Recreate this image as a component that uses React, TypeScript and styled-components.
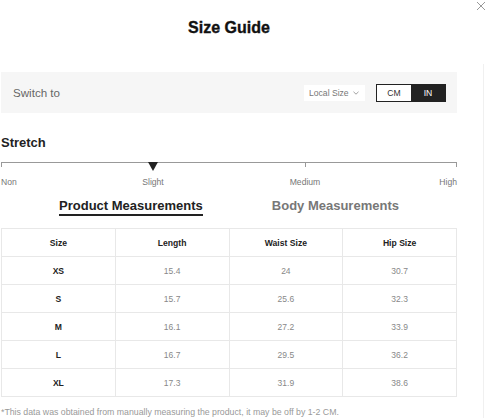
import React from "react";
import styled, { createGlobalStyle } from "styled-components";

const Global = createGlobalStyle`
  html, body { margin: 0; padding: 0; background: #fff; }
  body { font-family: "Liberation Sans", Arial, sans-serif; color: #222; overflow: hidden; }
  * { box-sizing: border-box; }
`;

const Page = styled.div`
  display: flex;
  width: 488px;
  height: 418px;
`;

const Main = styled.div`
  width: 456px;
  margin-left: 1px;
  display: flex;
  flex-direction: column;
`;

const Side = styled.div`
  flex: 1;
  display: flex;
  flex-direction: column;
`;

const CloseBtn = styled.div`
  margin: 1px 0 0 19px;
  width: 10px;
  height: 10px;
  display: flex;
`;

const Rail = styled.div`
  margin: 53px 0 0 26px;
  flex: 1;
  border-left: 1px solid #f0f0f0;
`;

const Title = styled.h1`
  margin: 19px 0 0;
  font-size: 16px;
  line-height: 18px;
  font-weight: 700;
  text-align: center;
  color: #111;
  -webkit-text-stroke: 0.35px #111;
`;

const Bar = styled.div`
  margin-top: 35px;
  height: 41px;
  background: #f6f6f6;
  display: flex;
  align-items: center;
  padding: 0 11px 0 12px;
`;

const BarLabel = styled.span`
  flex: 1;
  font-size: 11.6px;
  color: #666;
`;

const Select = styled.div`
  width: 61px;
  height: 16px;
  background: #fff;
  display: flex;
  align-items: center;
  justify-content: space-between;
  padding: 0 6px 0 5px;
  font-size: 8.6px;
  color: #777;
  margin-right: 11px;
`;

const Toggle = styled.div`
  display: flex;
  width: 70px;
  height: 18px;
  border: 1px solid #222;
`;

const ToggleOpt = styled.div<{ $active?: boolean }>`
  flex: 1;
  display: flex;
  align-items: center;
  justify-content: center;
  font-size: 8.6px;
  background: ${(p) => (p.$active ? "#222" : "#fff")};
  color: ${(p) => (p.$active ? "#fff" : "#333")};
`;

const SectionTitle = styled.h2`
  margin: 21.5px 0 0;
  font-size: 13px;
  line-height: 15px;
  font-weight: 700;
  color: #222;
`;

const Scale = styled.div`
  position: relative;
  margin-top: 12.5px;
`;

const Track = styled.div`
  display: grid;
  grid-template-columns: 1fr 1fr 1fr;
  height: 5px;
  border-top: 1px solid #999;
`;

const TrackSeg = styled.div<{ $left?: boolean; $right?: boolean }>`
  border-left: ${(p) => (p.$left ? "1px solid #999" : "none")};
  border-right: ${(p) => (p.$right ? "1px solid #999" : "none")};
`;

const Marker = styled.div`
  position: absolute;
  top: 0;
  left: 33.33%;
  transform: translateX(-50%);
  width: 0;
  height: 0;
  border-left: 5px solid transparent;
  border-right: 5px solid transparent;
  border-top: 9px solid #222;
`;

const Labels = styled.div`
  display: grid;
  grid-template-columns: repeat(6, 1fr);
  margin-top: 9.5px;
  font-size: 8.6px;
  line-height: 10px;
  color: #777;
`;

const ScaleLabel = styled.span<{ $col: string; $align: string }>`
  grid-column: ${(p) => p.$col};
  text-align: ${(p) => p.$align};
  white-space: nowrap;
`;

const Tabs = styled.div`
  display: flex;
  justify-content: center;
  gap: 69px;
  margin-top: 11.5px;
`;

const Tab = styled.div<{ $active?: boolean }>`
  font-size: 13px;
  line-height: 15px;
  font-weight: 700;
  color: ${(p) => (p.$active ? "#222" : "#777")};
  padding-bottom: 1px;
  border-bottom: 2px solid ${(p) => (p.$active ? "#222" : "transparent")};
`;

const Table = styled.table`
  margin-top: 12px;
  width: 456px;
  border-collapse: collapse;
  table-layout: fixed;
`;

const Th = styled.th`
  height: 28px;
  padding: 0;
  border: 1px solid #e8e8e8;
  font-size: 8.6px;
  font-weight: 700;
  color: #222;
  text-align: center;
`;

const Td = styled.td<{ $strong?: boolean }>`
  height: 28px;
  padding: 0;
  border: 1px solid #e8e8e8;
  font-size: ${(p) => (p.$strong ? "8.6px" : "8.5px")};
  font-weight: ${(p) => (p.$strong ? 700 : 400)};
  color: ${(p) => (p.$strong ? "#222" : "#888")};
  text-align: center;
`;

const Note = styled.p`
  margin: 9.7px 0 0;
  font-size: 8.75px;
  line-height: 10px;
  color: #999;
  white-space: nowrap;
`;

const rows = [
  ["XS", "15.4", "24", "30.7"],
  ["S", "15.7", "25.6", "32.3"],
  ["M", "16.1", "27.2", "33.9"],
  ["L", "16.7", "29.5", "36.2"],
  ["XL", "17.3", "31.9", "38.6"],
];

export default function App() {
  return (
    <>
      <Global />
      <Page>
        <Main>
          <Title>Size Guide</Title>
          <Bar>
            <BarLabel>Switch to</BarLabel>
            <Select>
              <span>Local Size</span>
              <svg width="6" height="4" viewBox="0 0 6 4">
                <path d="M0.5 0.8 L3 3.2 L5.5 0.8" fill="none" stroke="#888" strokeWidth="0.8" />
              </svg>
            </Select>
            <Toggle>
              <ToggleOpt>CM</ToggleOpt>
              <ToggleOpt $active>IN</ToggleOpt>
            </Toggle>
          </Bar>
          <SectionTitle>Stretch</SectionTitle>
          <Scale>
            <Track>
              <TrackSeg $left />
              <TrackSeg />
              <TrackSeg $left $right />
            </Track>
            <Marker />
          </Scale>
          <Labels>
            <ScaleLabel $col="1 / 2" $align="left">Non</ScaleLabel>
            <ScaleLabel $col="2 / 4" $align="center">Slight</ScaleLabel>
            <ScaleLabel $col="4 / 6" $align="center">Medium</ScaleLabel>
            <ScaleLabel $col="6 / 7" $align="right">High</ScaleLabel>
          </Labels>
          <Tabs>
            <Tab $active>Product Measurements</Tab>
            <Tab>Body Measurements</Tab>
          </Tabs>
          <Table>
            <thead>
              <tr>
                <Th>Size</Th>
                <Th>Length</Th>
                <Th>Waist Size</Th>
                <Th>Hip Size</Th>
              </tr>
            </thead>
            <tbody>
              {rows.map((r) => (
                <tr key={r[0]}>
                  <Td $strong>{r[0]}</Td>
                  <Td>{r[1]}</Td>
                  <Td>{r[2]}</Td>
                  <Td>{r[3]}</Td>
                </tr>
              ))}
            </tbody>
          </Table>
          <Note>*This data was obtained from manually measuring the product, it may be off by 1-2 CM.</Note>
        </Main>
        <Side>
          <CloseBtn>
            <svg width="10" height="10" viewBox="0 0 10 10">
              <path d="M1 1 L9 9 M9 1 L1 9" stroke="#999" strokeWidth="1" fill="none" />
            </svg>
          </CloseBtn>
          <Rail />
        </Side>
      </Page>
    </>
  );
}
